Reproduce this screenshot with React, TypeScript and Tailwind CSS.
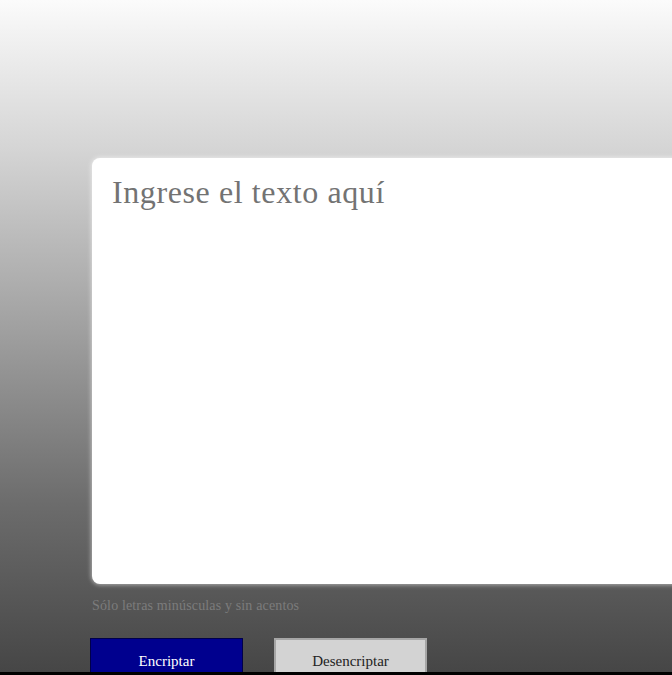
export default function App() {
  return (
    <div className="w-[672px] h-[675px] overflow-hidden flex flex-col font-['Liberation_Serif',serif]">
      <main className="h-[672px] overflow-hidden bg-[linear-gradient(to_bottom,#fbfbfb_0%,#f2f2f2_5%,#d5d5d5_22%,#9e9e9e_50%,#6c6c6c_75%,#464646_100%)] pl-[92px] pt-[158px]">
        <textarea
          placeholder="Ingrese el texto aquí"
          className="block w-[700px] h-[426px] resize-none rounded-lg bg-white px-5 pt-[10px] pb-3 text-[32px] tracking-[0.6px] text-[#6e6e6e] placeholder:text-[#737373] outline-none shadow-[0_0_4px_1px_rgba(255,255,255,0.5)]"
        />
        <p className="mt-[12px] text-[14px] tracking-[0.15px] leading-5 text-[#7c7c7c]">Sólo letras minúsculas y sin acentos</p>
        <div className="mt-[22px] flex gap-[31px] -ml-[2px]">
          <button className="w-[153px] h-[50px] pb-[3px] bg-[#00008e] border border-[#00004a] text-white text-[15px]">
            Encriptar
          </button>
          <button className="w-[153px] h-[50px] pb-[3px] bg-[#d3d3d3] border-2 border-[#a6a6a6] text-[#222] text-[15px]">
            Desencriptar
          </button>
        </div>
      </main>
      <div className="h-[3px] bg-black" />
    </div>
  );
}
